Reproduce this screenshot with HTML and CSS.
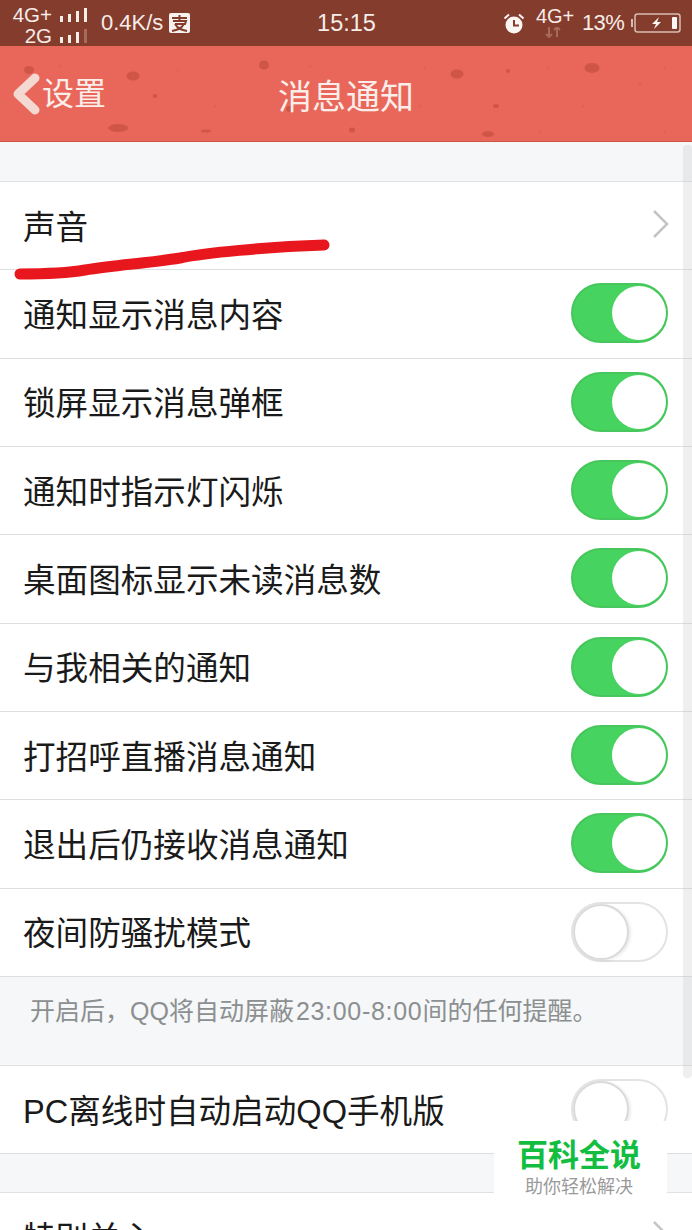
FILE: index.html
```html
<!DOCTYPE html>
<html lang="zh-CN">
<head>
    <meta charset="UTF-8">
    <meta name="viewport" content="width=device-width, initial-scale=1.0">
    <title>消息通知</title>
    <link rel="stylesheet" href="styles.css">
</head>
<body>
<div class="phone">

    <!-- Status bar -->
    <div class="status-bar">
        <div class="status-left">
            <div class="signals">
                <div class="signal-line">
                    <span>4G+</span>
                    <span class="bars"><i></i><i></i><i></i><i></i></span>
                </div>
                <div class="signal-line">
                    <span>2G</span>
                    <span class="bars"><i></i><i></i><i></i><i class="dim"></i></span>
                </div>
            </div>
            <span class="speed">0.4K/s</span>
            <svg class="app-icon" width="21" height="20" viewBox="0 0 21 20">
                <rect width="21" height="20" rx="2" fill="#f7f2ef"/>
                <path d="M3 5H18M10.500 2V8M4 8H17L16 11H6M6 11C9 16 13 17 18 18M15 11C12 16 8 17 3 18" fill="none" stroke="#843c2d" stroke-width="2"/>
            </svg>
        </div>
        <div class="clock">15:15</div>
        <div class="status-right">
            <svg class="alarm" width="22" height="21" viewBox="0 0 22 21">
                <circle cx="11" cy="12" r="8.500" fill="#fbf6f3"/>
                <path d="M11 7V12.500H16" fill="none" stroke="#843c2d" stroke-width="2"/>
                <path d="M1.500 5.500L6 1.500M20.500 5.500L16 1.500" fill="none" stroke="#fbf6f3" stroke-width="2"/>
            </svg>
            <div class="net">
                <span>4G+</span>
                <svg width="18" height="11" viewBox="0 0 18 11">
                    <path d="M5 0V10M2 7L5 10L8 7M13 10V0M10 3L13 0L16 3" fill="none" stroke="#a56a5b" stroke-width="2"/>
                </svg>
            </div>
            <span class="percent">13%</span>
            <svg class="battery" width="50" height="20" viewBox="0 0 50 20">
                <rect x="0" y="6" width="2" height="8" fill="#d8bdb4"/>
                <rect x="4" y="1" width="45" height="18" rx="2.500" fill="none" stroke="#d8bdb4" stroke-width="1.500"/>
                <path d="M28 4L21 11H25L23 16L30 9H26Z" fill="#fbf6f3"/>
                <rect x="41" y="4" width="5" height="12" rx="1" fill="#fbf6f3"/>
            </svg>
        </div>
    </div>

    <!-- Nav bar -->
    <div class="nav-bar">
        <svg class="nav-texture" width="692" height="96" viewBox="0 0 692 96">
            <g fill="#bf4c3c" opacity="0.6">
                <ellipse cx="29" cy="24" rx="5" ry="4"/>
                <ellipse cx="133" cy="30" rx="6.500" ry="4.500"/>
                <ellipse cx="155" cy="50" rx="2.500" ry="2"/>
                <ellipse cx="118" cy="82" rx="10" ry="4"/>
                <ellipse cx="206" cy="85" rx="5" ry="1.500"/>
                <ellipse cx="264" cy="19" rx="5" ry="4.500"/>
                <ellipse cx="457" cy="28" rx="6.500" ry="4.500"/>
                <ellipse cx="508" cy="25" rx="2" ry="2"/>
                <ellipse cx="592" cy="22" rx="7.500" ry="5"/>
                <ellipse cx="496" cy="60" rx="3" ry="2"/>
                <ellipse cx="488" cy="88" rx="6" ry="3"/>
                <ellipse cx="352" cy="84" rx="3" ry="2.500"/>
                <ellipse cx="290" cy="63" rx="4" ry="3"/>
            </g>
            <g fill="#d65c4d" opacity="0.45">
                <circle cx="60" cy="20" r="1.500"/>
                <circle cx="178" cy="24" r="1.500"/>
                <circle cx="215" cy="60" r="1.500"/>
                <circle cx="310" cy="20" r="1.500"/>
                <circle cx="425" cy="22" r="1.500"/>
                <circle cx="548" cy="22" r="1.500"/>
                <circle cx="583" cy="60" r="1.500"/>
                <circle cx="665" cy="22" r="1.500"/>
                <circle cx="640" cy="38" r="1.500"/>
                <circle cx="420" cy="60" r="1.500"/>
                <circle cx="540" cy="86" r="1.500"/>
                <circle cx="665" cy="86" r="1.500"/>
            </g>
        </svg>
        <a class="nav-back">
            <svg width="30" height="44" viewBox="0 0 30 44">
                <path d="M24 6L7 22L24 38" fill="none" stroke="#f4d9d3" stroke-width="9" stroke-linejoin="round" stroke-linecap="round"/>
            </svg>
            <span>设置</span>
        </a>
        <div class="nav-title">消息通知</div>
    </div>

    <div class="gap"></div>

    <div class="group">
        <div class="row">
            <span>声音</span>
            <svg class="chevron" width="18" height="30" viewBox="0 0 18 30">
                <path d="M2 2L15 15L2 28" fill="none" stroke="#c4c4c6" stroke-width="2.500"/>
            </svg>
        </div>
        <div class="row"><span>通知显示消息内容</span><div class="switch on"></div></div>
        <div class="row"><span>锁屏显示消息弹框</span><div class="switch on"></div></div>
        <div class="row"><span>通知时指示灯闪烁</span><div class="switch on"></div></div>
        <div class="row"><span>桌面图标显示未读消息数</span><div class="switch on"></div></div>
        <div class="row"><span>与我相关的通知</span><div class="switch on"></div></div>
        <div class="row"><span>打招呼直播消息通知</span><div class="switch on"></div></div>
        <div class="row"><span>退出后仍接收消息通知</span><div class="switch on"></div></div>
        <div class="row"><span>夜间防骚扰模式</span><div class="switch"></div></div>
    </div>

    <div class="note">开启后，QQ将自动屏蔽<span class="note-num">23:00-8:00</span>间的任何提醒。</div>

    <div class="group">
        <div class="row"><span>PC离线时自动启动QQ手机版</span><div class="switch"></div></div>
    </div>

    <div class="gap gap-small"></div>

    <div class="group">
        <div class="row">
            <span>特别关心</span>
            <svg class="chevron" width="18" height="30" viewBox="0 0 18 30">
                <path d="M2 2L15 15L2 28" fill="none" stroke="#c4c4c6" stroke-width="2.500"/>
            </svg>
        </div>
    </div>

    <!-- Things on top of the page -->
    <div class="scrollbar"></div>
    <svg class="red-line" width="692" height="60" viewBox="0 0 692 60">
        <path d="M20 36C40 36 62 36 85 32C115 27 150 25 180 20C205 15 265 9 324 7" fill="none" stroke="#e8171d" stroke-width="11" stroke-linecap="round"/>
    </svg>
    <div class="watermark">
        <div class="wm-title">百科全说</div>
        <div class="wm-sub">助你轻松解决</div>
    </div>
</div>
</body>
</html>
```

FILE: styles.css
```css
html, body {
    margin: 0;
    padding: 0;
}
body {
    font-family: "Liberation Sans", "Noto Sans CJK SC", sans-serif;
    background-color: #f5f7f8;
}
.phone {
    position: relative;
    width: 692px;
    height: 1230px;
    overflow: hidden;
    background-color: #f5f7f8;
    color: #1a1a1a;
}

/* status bar */
.status-bar {
    display: grid;
    grid-template-columns: 1fr auto 1fr;
    align-items: center;
    height: 46px;
    background-color: #843c2d;
    color: #f6ece8;
}
.status-left {
    display: flex;
    align-items: center;
    padding-left: 11px;
}
.signals {
    box-sizing: border-box;
    width: 76px;
    height: 46px;
    padding-top: 4px;
}
.signal-line {
    display: flex;
    justify-content: flex-end;
    align-items: center;
    gap: 8px;
    height: 21px;
    font-size: 20.500px;
    line-height: 21px;
    white-space: nowrap;
}
.bars {
    display: flex;
    align-items: flex-end;
    gap: 5px;
    height: 14px;
}
.bars i {
    width: 3px;
    background-color: #f6ece8;
}
.bars i:nth-child(1) { height: 6px; }
.bars i:nth-child(2) { height: 8px; }
.bars i:nth-child(3) { height: 11px; }
.bars i:nth-child(4) { height: 14px; }
.bars i.dim {
    background-color: #a56a5b;
}
.speed {
    margin-left: 14px;
    font-size: 22px;
}
.app-icon {
    margin-left: 6px;
}
.clock {
    margin-left: 1px;
    font-size: 23.500px;
}
.status-right {
    display: flex;
    align-items: center;
    justify-content: flex-end;
    padding-right: 11px;
}
.alarm {
    margin-right: 9px;
}
.net {
    display: flex;
    flex-direction: column;
    align-items: center;
    width: 42px;
    height: 36px;
    font-size: 20px;
    line-height: 22px;
}
.net svg {
    margin-right: 4px;
}
.percent {
    margin-left: 6px;
    margin-right: 7px;
    font-size: 22px;
    letter-spacing: -0.7px;
}

/* nav bar */
.nav-bar {
    position: relative;
    display: flex;
    align-items: center;
    justify-content: center;
    height: 95px;
    background-color: #e8675a;
    border-bottom: 1px solid #c95647;
    color: #fbeeea;
}
.nav-texture {
    position: absolute;
    left: 0;
    top: 0;
}
.nav-back {
    position: absolute;
    left: 11px;
    top: 26px;
    display: flex;
    align-items: center;
    font-size: 32px;
}
.nav-back span {
    margin-left: 1px;
    line-height: 44px;
}
.nav-title {
    position: relative;
    font-size: 34px;
    margin-top: 2px;
}

/* list */
.gap {
    height: 39px;
}
.gap-small {
    height: 38px;
}
.group {
    background-color: #fff;
    border-top: 1px solid #dfe2e3;
}
.row {
    display: flex;
    align-items: center;
    justify-content: space-between;
    box-sizing: border-box;
    height: 88.33px;
    padding: 0 24px 0 23px;
    border-bottom: 1px solid #dcdfe0;
    font-size: 32.600px;
    white-space: nowrap;
}
.row span {
    margin-top: -3px;
}
.chevron {
    margin-top: -3px;
    margin-right: -2px;
}
.switch {
    position: relative;
    box-sizing: border-box;
    width: 97px;
    height: 60px;
    margin-top: -1px;
    border-radius: 30px;
    background-color: #fff;
    border: 2px solid #e3e3e3;
}
.switch::after {
    content: "";
    position: absolute;
    left: 0;
    top: 0;
    box-sizing: border-box;
    width: 56px;
    height: 56px;
    border-radius: 50%;
    background-color: #fff;
    border: 2px solid #dadada;
    box-shadow: 2px 1px 3px rgba(0, 0, 0, 0.08);
}
.switch.on {
    background-color: #46d35f;
    border: 2px solid #46c65c;
}
.switch.on::after {
    left: auto;
    right: 0;
    top: 1px;
    width: 54px;
    height: 54px;
    border: none;
    box-shadow: none;
}
.note {
    box-sizing: border-box;
    height: 88px;
    padding: 14px 30px 0;
    font-size: 25px;
    line-height: 40px;
    color: #8c8f90;
    white-space: nowrap;
}
.note-num {
    margin-left: 2px;
    letter-spacing: 0.7px;
}

/* overlays */
.scrollbar {
    position: absolute;
    right: 0;
    top: 145px;
    width: 9px;
    height: 933px;
    border-radius: 4px;
    background-color: rgba(190, 190, 190, 0.25);
}
.red-line {
    position: absolute;
    left: 0;
    top: 238px;
}
.watermark {
    position: absolute;
    left: 494px;
    top: 1121px;
    box-sizing: border-box;
    width: 173px;
    height: 84px;
    padding: 17px 3px 0 0;
    background-color: #fff;
    text-align: center;
}
.wm-title {
    font-size: 31px;
    line-height: 36px;
    font-weight: 700;
    color: #12bd3f;
}
.wm-sub {
    margin-top: 1px;
    font-size: 18px;
    line-height: 24px;
    color: #9a9a9a;
}
```
